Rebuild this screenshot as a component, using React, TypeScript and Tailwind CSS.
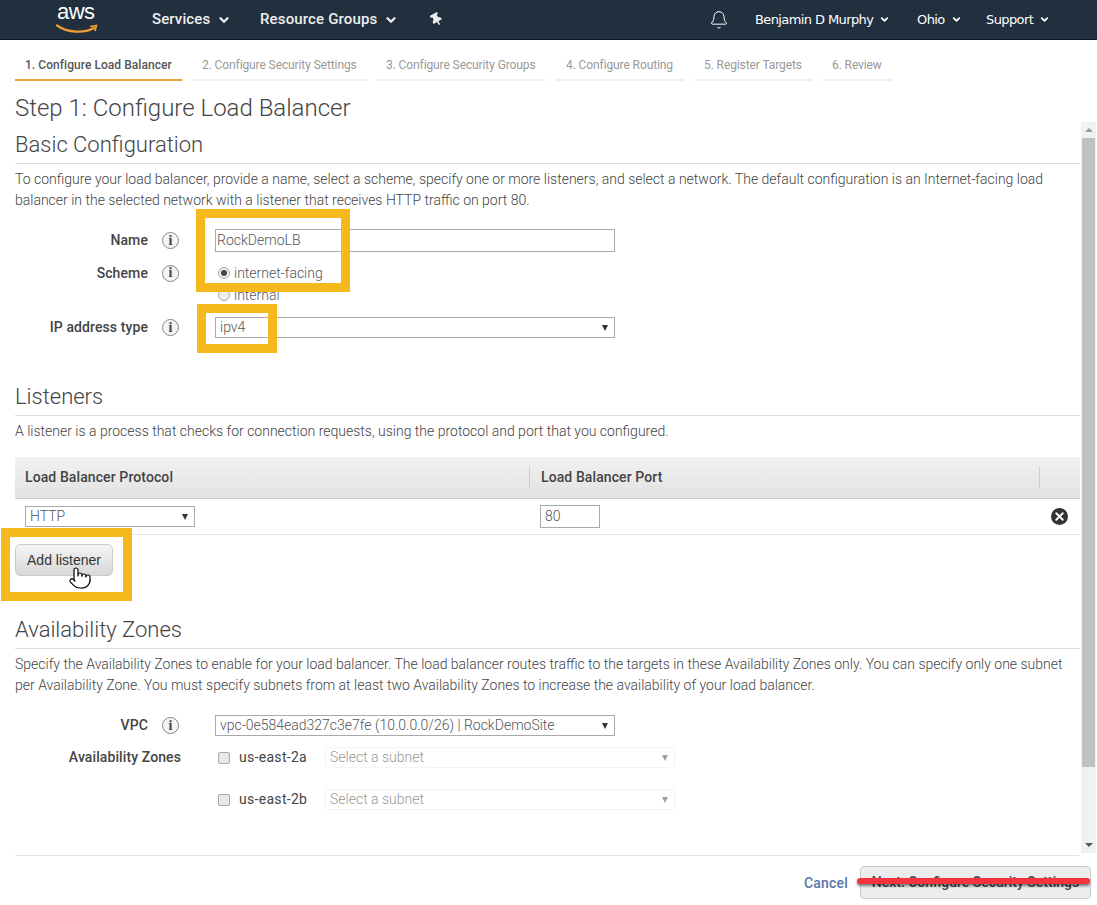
import { Bell, ChevronDown, Pointer, X } from 'lucide-react';
import { FaThumbtack } from 'react-icons/fa';

const tabs = [
  { label: '1. Configure Load Balancer', width: 'w-[167px]', active: true },
  { label: '2. Configure Security Settings', width: 'w-[174px]' },
  { label: '3. Configure Security Groups', width: 'w-[170px]' },
  { label: '4. Configure Routing', width: 'w-[128px]' },
  { label: '5. Register Targets', width: 'w-[118px]' },
  { label: '6. Review', width: 'w-[70px]' },
];

function NavItem({ label, className, small }: { label: string; className: string; small?: boolean }) {
  return (
    <div className={`flex items-center ${className}`}>
      <span>{label}</span>
      <ChevronDown className={small ? 'w-[11px] h-[11px] ml-[6px]' : 'w-[14px] h-[14px] ml-[7px]'} strokeWidth={4} />
    </div>
  );
}

function Arrow({ faint }: { faint?: boolean }) {
  return <span className={`w-0 h-0 border-x-[3.5px] border-x-transparent border-t-[6px] ${faint ? 'border-t-gray-400' : 'border-t-[#333]'}`} />;
}

function Label({ text, icon = true, className = '' }: { text: string; icon?: boolean; className?: string }) {
  return (
    <div className={`flex items-center shrink-0 w-[200px] ${className}`}>
      <span className={`text-right font-medium text-[14px] tracking-[0.1px] text-[#444] ${icon ? 'w-[133px]' : 'w-[166px]'}`}>{text}</span>
      {icon && (
        <span className="ml-[14px] w-[17px] h-[17px] rounded-full border border-[#888] bg-[#f4f4f4] flex items-center justify-center font-['Liberation_Serif',serif] font-bold text-[14px] leading-none text-[#444]">
          i
        </span>
      )}
    </div>
  );
}

function Select({ value, className }: { value: string; className: string }) {
  return (
    <div className={`h-[21px] border border-[#aaa] flex items-center justify-between pl-[4px] pr-[6px] text-[14px] font-light text-[#555] ${className}`}>
      <span>{value}</span>
      <Arrow />
    </div>
  );
}

function Zone({ name, className = '' }: { name: string; className?: string }) {
  return (
    <div className={`flex items-center ${className}`}>
      <span className="w-[12px] h-[12px] ml-[3px] mr-[9px] border border-[#aaa] rounded-[2px] bg-[#e8e8e8]" />
      <span className="w-[86px] text-[14px] tracking-[0.3px] text-[#444]">{name}</span>
      <div className="w-[350px] h-[21px] border border-[#f4f4f4] flex items-center justify-between pl-[4px] pr-[6px] text-[14px] font-light text-[#999]">
        <span>Select a subnet</span>
        <Arrow faint />
      </div>
    </div>
  );
}

export default function App() {
  return (
    <div className="relative w-[1097px] h-[905px] overflow-hidden bg-white flex flex-col font-['Roboto',sans-serif] text-[#444]">
      <header className="h-[40px] shrink-0 bg-[#212f3e] border-b border-[#10181f] flex items-center text-white">
        <div className="relative w-[152px] h-full pl-[57px]">
          <span className="block text-[22px] leading-[26px] font-['Liberation_Sans',sans-serif] tracking-[-0.5px] -mt-[1px]">aws</span>
          <svg className="absolute left-[56px] top-[24px]" width="42" height="10" viewBox="0 0 42 10" fill="none">
            <path d="M1 1.5C12 9 28 9.5 38 4" stroke="#f0a030" strokeWidth="2.2" strokeLinecap="round" />
            <path d="M34 2.5L40.5 1.5L39 7" stroke="#f0a030" strokeWidth="1.6" />
          </svg>
        </div>
        <NavItem label="Services" className="text-[15px] font-medium tracking-[0.1px] text-[#eee] w-[108px]" />
        <NavItem label="Resource Groups" className="text-[15px] font-medium tracking-[0.15px] text-[#eee] w-[170px]" />
        <FaThumbtack className="w-[13px] h-[13px] -rotate-[30deg] text-[#eee]" />
        <div className="flex-1" />
        <Bell className="w-[20px] h-[20px] mr-[26px] text-white" strokeWidth={1.2} />
        <NavItem small label="Benjamin D Murphy" className="text-[13px] font-['DejaVu_Sans',sans-serif] tracking-[-0.6px] w-[162px]" />
        <NavItem small label="Ohio" className="text-[13px] font-['DejaVu_Sans',sans-serif] tracking-[-0.6px] w-[69px]" />
        <NavItem small label="Support" className="text-[13px] font-['DejaVu_Sans',sans-serif] tracking-[-0.6px] w-[97px]" />
        <div className="w-[14px]" />
      </header>

      <nav className="flex gap-[10px] pl-[15px] h-[42px] shrink-0">
        {tabs.map((t) => (
          <div
            key={t.label}
            className={`${t.width} h-[41px] pt-[16px] pl-[10px] text-[12px] whitespace-nowrap border-b-2 ${
              t.active ? 'border-[#e9a93a] font-medium tracking-[0.05px] text-[#555]' : 'border-[#f0f0f0] tracking-[-0.1px] text-[#999]'
            }`}
          >
            {t.label}
          </div>
        ))}
      </nav>

      <h1 className="pl-[15px] h-[40px] shrink-0 text-[24px] leading-[52px] font-light text-[#444]">Step 1: Configure Load Balancer</h1>

      <div className="flex h-[731px] shrink-0">
        <main className="w-[1065px] ml-[15px] shrink-0 overflow-hidden">
          <h2 className="h-[42px] pt-[9px] text-[22px] leading-[28px] font-light border-b border-[#ddd]">Basic Configuration</h2>
          <p className="mt-[5px] text-[14px] leading-[21px] font-light text-[#444] whitespace-nowrap">
            To configure your load balancer, provide a name, select a scheme, specify one or more listeners, and select a network. The default configuration is an Internet-facing load
            <br />
            balancer in the selected network with a listener that receives HTTP traffic on port 80.
          </p>

          <div className="mt-[18px] flex items-center h-[23px]">
            <Label text="Name" />
            <div className="w-[400px] h-[23px] border border-[#aaa] pl-[1px] text-[14px] leading-[21px] font-light text-[#555]">RockDemoLB</div>
          </div>
          <div className="mt-[10px] flex h-[43px]">
            <Label text="Scheme" className="h-[22px]" />
            <div className="flex flex-col pl-[3px] text-[14px] font-light text-[#555]">
              <div className="flex items-center h-[23px]">
                <span className="w-[12px] h-[12px] mr-[4px] rounded-full border border-[#aaa] bg-[#eee] flex items-center justify-center">
                  <span className="w-[6px] h-[6px] rounded-full bg-[#444]" />
                </span>
                internet-facing
              </div>
              <div className="flex items-center h-[20px] mt-[1px]">
                <span className="w-[12px] h-[12px] mr-[4px] rounded-full border border-[#aaa] bg-[#eee]" />
                internal
              </div>
            </div>
          </div>
          <div className="mt-[12px] flex items-center">
            <Label text="IP address type" />
            <Select value="ipv4" className="w-[400px] pl-[4px]" />
          </div>

          <h2 className="mt-[45px] h-[28px] text-[22px] leading-[28px] font-light border-b border-[#ddd] box-content pb-[4px]">Listeners</h2>
          <p className="mt-[5px] text-[14px] leading-[21px] font-light">A listener is a process that checks for connection requests, using the protocol and port that you configured.</p>

          <div className="mt-[15px] h-[42px] flex items-center bg-gradient-to-b from-[#f2f2f2] to-[#e2e2e2] border-b border-[#ccc] text-[14px] font-medium tracking-[0.1px] text-[#444]">
            <div className="w-[515px] pl-[10px] border-r border-[#ccc]">Load Balancer Protocol</div>
            <div className="w-[510px] pl-[11px] border-r border-[#ccc]">Load Balancer Port</div>
          </div>
          <div className="relative h-[36px] flex items-center border-b border-[#e4e4e4]">
            <Select value="HTTP" className="w-[170px] ml-[10px]" />
            <div className="w-[60px] h-[23px] ml-[345px] border border-[#aaa] pl-[4px] text-[14px] leading-[21px] font-light text-[#555]">80</div>
            <span className="ml-[451px] w-[17px] h-[17px] rounded-full bg-[#333] flex items-center justify-center">
              <X className="w-[13px] h-[13px] text-white" strokeWidth={3.5} />
            </span>
          </div>
          <button className="block mt-[9px] w-[98px] h-[32px] rounded-[5px] border border-[#ccc] bg-gradient-to-b from-[#f4f4f4] to-[#d8d8d8] text-[14px] text-[#333] font-['Liberation_Sans',sans-serif]">
            Add listener
          </button>

          <h2 className="mt-[40px] h-[33px] text-[22px] leading-[28px] font-light border-b border-[#ddd]">Availability Zones</h2>
          <p className="mt-[5px] text-[14px] leading-[21px] font-light whitespace-nowrap">
            Specify the Availability Zones to enable for your load balancer. The load balancer routes traffic to the targets in these Availability Zones only. You can specify only one subnet
            <br />
            per Availability Zone. You must specify subnets from at least two Availability Zones to increase the availability of your load balancer.
          </p>

          <div className="mt-[19px] flex items-center">
            <Label text="VPC" />
            <Select value="vpc-0e584ead327c3e7fe (10.0.0.0/26) | RockDemoSite" className="w-[400px]" />
          </div>
          <div className="mt-[11px] flex items-center">
            <Label text="Availability Zones" icon={false} />
            <Zone name="us-east-2a" />
          </div>
          <Zone name="us-east-2b" className="mt-[21px] ml-[200px]" />
        </main>

        <div className="w-[15px] ml-[1px] shrink-0 bg-[#f1f1f1] flex flex-col items-center">
          <span className="mt-[6px] w-0 h-0 border-x-[4px] border-x-transparent border-b-[4px] border-b-[#999]" />
          <div className="mt-[6px] w-[13px] h-[629px] bg-[#c1c1c1]" />
          <div className="flex-1" />
          <span className="mb-[6px] w-0 h-0 border-x-[4px] border-x-transparent border-t-[4px] border-t-[#555]" />
        </div>
      </div>

      <footer className="relative ml-[15px] mr-[18px] mt-[2px] flex-1 border-t border-[#e4e4e4] flex items-start justify-end">
        <span className="mt-[17px] mr-[12px] text-[14px] font-medium tracking-[0.2px] text-[#5577a8]">Cancel</span>
        <button className="mt-[10px] -mr-[12px] w-[231px] h-[33px] rounded-[4px] border border-[#ccc] bg-[#ededed] text-[14px] font-medium text-[#444]">
          Next: Configure Security Settings
        </button>
      </footer>

      <div className="absolute left-[196px] top-[209px] w-[154px] h-[83px] border-[9px] border-[#f5b91e]" />
      <div className="absolute left-[197px] top-[304px] w-[80px] h-[49px] border-[9px] border-[#f5b91e]" />
      <div className="absolute left-[1px] top-[528px] w-[131px] h-[73px] border-[9px] border-[#f5b91e]" />
      <Pointer className="absolute left-[68px] top-[564px] w-[24px] h-[28px] fill-white text-black" strokeWidth={1.2} />
      <div className="absolute left-[857px] top-[878px] w-[233px] h-[6px] rounded-full bg-[#f5333f] shadow-[0_2px_3px_rgba(0,0,0,0.5)]" />
    </div>
  );
}
